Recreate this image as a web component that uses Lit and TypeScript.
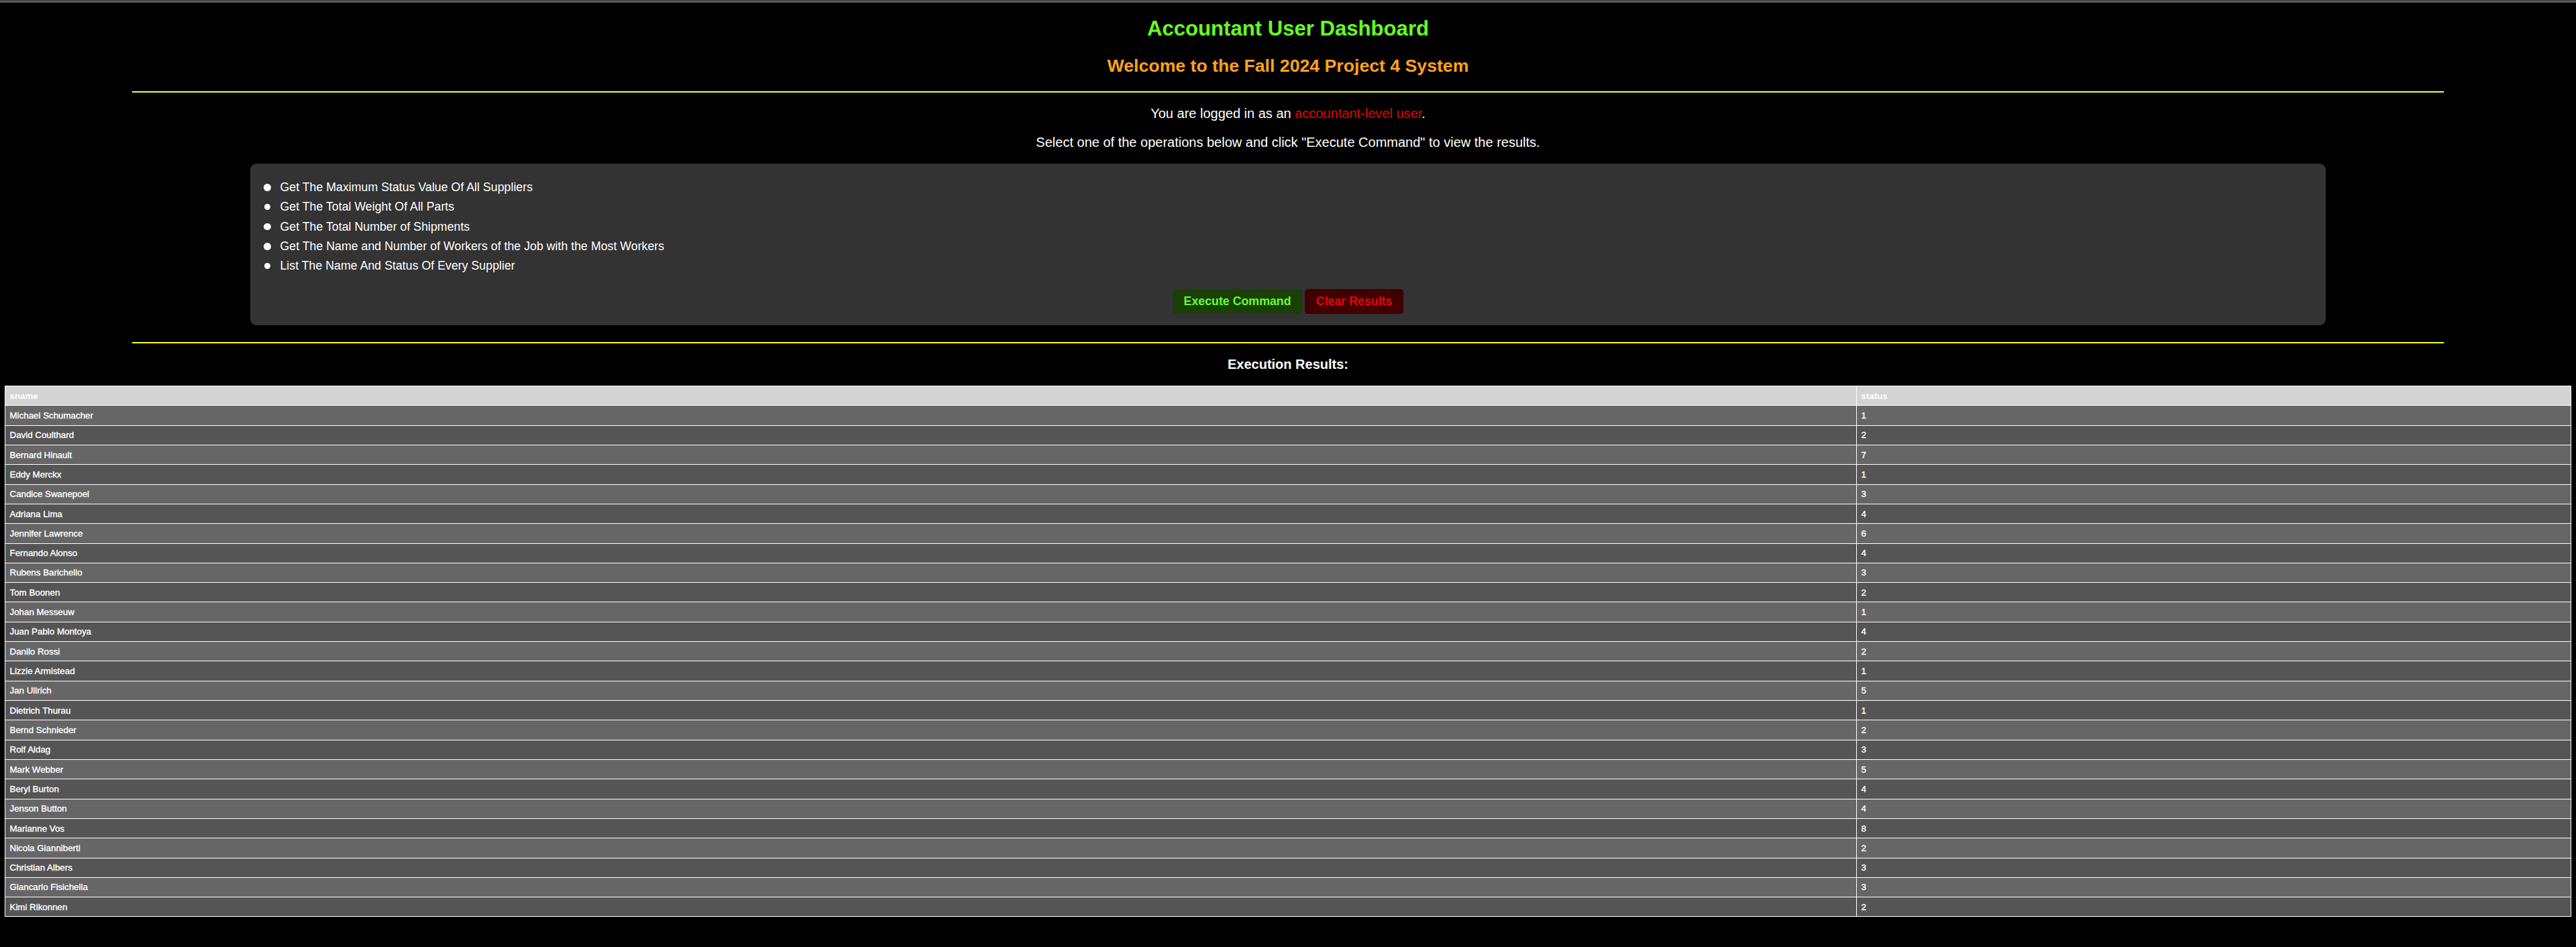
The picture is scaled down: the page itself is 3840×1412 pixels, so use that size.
import { LitElement, html, css } from "lit";
import { customElement } from "lit/decorators.js";

const OPERATIONS = [
  "Get The Maximum Status Value Of All Suppliers",
  "Get The Total Weight Of All Parts",
  "Get The Total Number of Shipments",
  "Get The Name and Number of Workers of the Job with the Most Workers",
  "List The Name And Status Of Every Supplier",
];

const SUPPLIERS: [string, number][] = [
  ["Michael Schumacher", 1],
  ["David Coulthard", 2],
  ["Bernard Hinault", 7],
  ["Eddy Merckx", 1],
  ["Candice Swanepoel", 3],
  ["Adriana Lima", 4],
  ["Jennifer Lawrence", 6],
  ["Fernando Alonso", 4],
  ["Rubens Barichello", 3],
  ["Tom Boonen", 2],
  ["Johan Messeuw", 1],
  ["Juan Pablo Montoya", 4],
  ["Danilo Rossi", 2],
  ["Lizzie Armistead", 1],
  ["Jan Ullrich", 5],
  ["Dietrich Thurau", 1],
  ["Bernd Schnieder", 2],
  ["Rolf Aldag", 3],
  ["Mark Webber", 5],
  ["Beryl Burton", 4],
  ["Jenson Button", 4],
  ["Marianne Vos", 8],
  ["Nicola Gianniberti", 2],
  ["Christian Albers", 3],
  ["Giancarlo Fisichella", 3],
  ["Kimi Rikonnen", 2],
];

@customElement("app-root")
export class AppRoot extends LitElement {
  static styles = css`
    :host {
      display: block;
      box-sizing: border-box;
      height: 1412px;
      overflow: hidden;
      background: #000;
      color: #fff;
      font-family: "Liberation Sans", Arial, sans-serif;
      border-top: 1px solid #333;
    }
    .page {
      border-top: 3px solid #5a5a5a;
      display: flex;
      flex-direction: column;
      align-items: center;
      text-align: center;
    }
    h1, h2, h3, p, ul { margin: 0; padding: 0; font-weight: normal; }
    h1 {
      font-weight: bold;
      font-size: 31.11px;
      line-height: 35px;
      margin-top: 21px;
      color: #66ff22;
    }
    h2 {
      font-weight: bold;
      font-size: 26.67px;
      line-height: 30px;
      margin-top: 23px;
      color: #ffa31a;
    }
    .rule { width: 3446px; height: 2px; background: #ffff1f; }
    .rule.first { margin-top: 23px; }
    .rule.second { margin-top: 25px; }
    p { font-size: 20px; line-height: 22px; }
    .login { margin-top: 20px; }
    .hint { margin-top: 21px; }
    .level { color: #e60000; }
    .panel {
      box-sizing: border-box;
      width: 3094px;
      height: 241px;
      margin-top: 21px;
      padding: 20.3px 20px 0;
      border-radius: 9px;
      background: #333;
      display: flex;
      flex-direction: column;
    }
    .ops { list-style: none; }
    .op {
      display: flex;
      align-items: center;
      height: 29.33px;
      gap: 13.9px;
      font-size: 17.78px;
      line-height: 20px;
    }
    .dot {
      box-sizing: border-box;
      width: 10.6px;
      height: 10.6px;
      margin-top: 0.8px;
      border-radius: 50%;
      background: #fff;
    }
    .op:nth-child(3n + 2) .dot {
      width: 9px;
      height: 9px;
      margin-left: 0.8px;
      margin-right: 0.8px;
    }
    .buttons {
      display: flex;
      justify-content: center;
      gap: 4px;
      margin-top: 20.05px;
    }
    button {
      box-sizing: border-box;
      height: 37px;
      padding: 0 16.67px 1px;
      border: 0;
      border-radius: 4.5px;
      font: bold 17.78px/20px "Liberation Sans", Arial, sans-serif;
    }
    .execute { background: #1a4008; color: #66ff33; }
    .clear { background: #400000; color: #f00000; }
    h3 { font-weight: bold; font-size: 20px; line-height: 22px; margin-top: 20px; }
    table {
      width: 3826px;
      margin-top: 21px;
      table-layout: fixed;
      border-collapse: collapse;
      text-align: left;
      font-size: 13.333px;
      line-height: 15px;
    }
    .name-col { width: 2760px; }
    tr { height: 29.3125px; }
    th, td { border: 1px solid #fff; padding: 0 6.5px; }
    th { background: #d3d3d3; }
    td { background: #555; -webkit-text-stroke: 0.35px #fff; }
    .odd td { background: #666; }
  `;

  render() {
    return html`
      <main class="page">
        <h1>Accountant User Dashboard</h1>
        <h2>Welcome to the Fall 2024 Project 4 System</h2>
        <div class="rule first"></div>
        <p class="login">You are logged in as an <span class="level">accountant-level user</span>.</p>
        <p class="hint">Select one of the operations below and click "Execute Command" to view the results.</p>
        <section class="panel">
          <ul class="ops">
            ${OPERATIONS.map((o) => html`<li class="op"><i class="dot"></i><span>${o}</span></li>`)}
          </ul>
          <div class="buttons">
            <button class="execute">Execute Command</button>
            <button class="clear">Clear Results</button>
          </div>
        </section>
        <div class="rule second"></div>
        <h3>Execution Results:</h3>
        <table>
          <colgroup><col class="name-col" /><col /></colgroup>
          <thead><tr><th>sname</th><th>status</th></tr></thead>
          <tbody>
            ${SUPPLIERS.map(
              ([name, status], i) => html`<tr class=${i % 2 ? "even" : "odd"}><td>${name}</td><td>${status}</td></tr>`,
            )}
          </tbody>
        </table>
      </main>
    `;
  }
}
